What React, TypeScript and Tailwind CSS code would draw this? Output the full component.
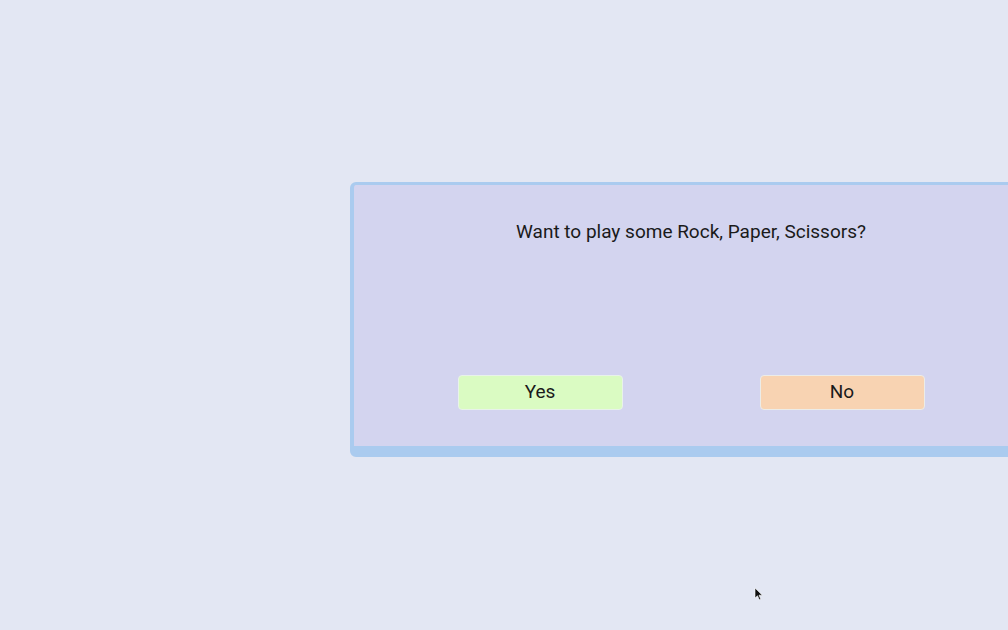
const Cursor = () => (
  <svg
    width="10"
    height="14"
    viewBox="0 0 10 14"
    className="absolute left-[754px] top-[587px]"
  >
    <path d="M1 1 L1 11 L3.5 8.8 L5.3 12.8 L6.8 12.1 L5 8.2 L8.3 8.2 Z" fill="#111" stroke="#fff" strokeWidth="0.6" />
  </svg>
);

export default function App() {
  return (
    <div className="relative h-[630px] w-[1008px] overflow-hidden bg-[#e3e7f3] font-['Roboto',sans-serif]">
      <div className="pl-[350px] pt-[182px]">
        <div className="flex h-[275px] w-[682px] flex-col rounded-md border-[4px] border-b-[11px] border-t-[3px] border-[#aacbef] bg-[#d3d4ef]">
          <p className="pt-[33px] text-center text-[19px] leading-[28px] text-[#1a1a1a]">
            Want to play some Rock, Paper, Scissors?
          </p>
          <div className="mt-auto mb-[36px] flex justify-center gap-[137px]">
            <button className="h-[35px] w-[165px] rounded-[4px] border border-[#e8f2ea] bg-[#dafbc2] text-[19px] text-[#1a1a1a]">
              Yes
            </button>
            <button className="h-[35px] w-[165px] rounded-[4px] border border-[#ecece8] bg-[#f8d3b2] text-[19px] text-[#1a1a1a]">
              No
            </button>
          </div>
        </div>
      </div>
      <Cursor />
    </div>
  );
}
